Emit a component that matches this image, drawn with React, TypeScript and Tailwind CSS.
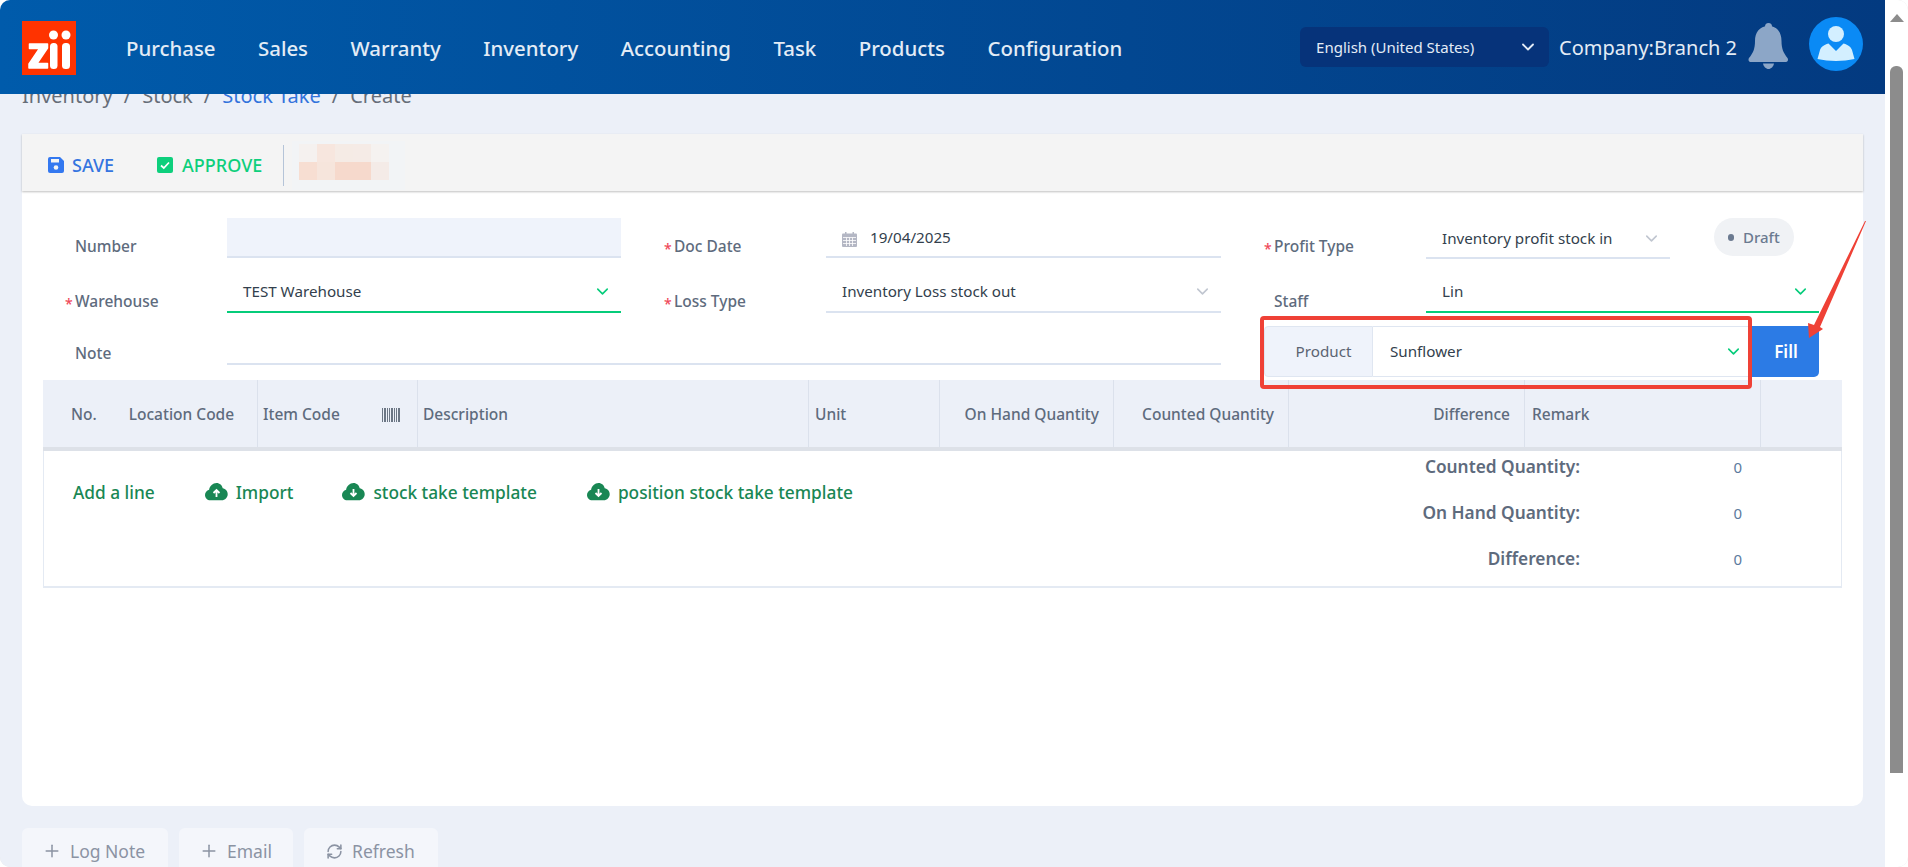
import { ChevronDown, Plus, RefreshCw } from 'lucide-react';

const NAV = ['Purchase', 'Sales', 'Warranty', 'Inventory', 'Accounting', 'Task', 'Products', 'Configuration'];

function Logo() {
  return (
    <div className="w-[54px] h-[54px] mt-[2px] bg-[#ff3300] shrink-0">
      <svg width="54" height="54" viewBox="0 0 54 54" fill="#fff" stroke="#fff" strokeLinejoin="round">
        <path strokeWidth="1.500" d="M7.500 23h18v4L15 42.500h10.500V47H7v-4L17.500 27.500H7.500z" />
        <circle cx="31.500" cy="14" r="4.500" stroke="none" />
        <circle cx="44" cy="14" r="4.500" stroke="none" />
        <rect x="28" y="22" width="7.500" height="26" rx="3.500" stroke="none" />
        <rect x="40" y="22" width="8" height="26" rx="3.500" stroke="none" />
      </svg>
    </div>
  );
}

function Bell() {
  return (
    <svg width="41" height="46" viewBox="0 0 41 46" fill="#8ca6c7" className="shrink-0">
      <circle cx="20.5" cy="3.5" r="3.5" />
      <path d="M20.5 3c9 0 13 7 13 15 0 8 2 12 6 17 1 1.500 .5 4-1.500 4H2.500c-2 0-2.500-2.500-1.500-4 4-5 6-9 6-17 0-8 4-15 13.500-15z" />
      <path d="M15 40.500h11c-.5 3-3 5.500-5.500 5.500S15.500 43.500 15 40.500z" />
    </svg>
  );
}

function Avatar() {
  return (
    <div className="w-[54px] h-[54px] mb-[6px] rounded-full bg-[#0a8af5] shrink-0">
      <svg width="54" height="54" viewBox="0 0 54 54" fill="#d3efff">
        <circle cx="27" cy="17" r="8" />
        <path d="M19.500 26.500l7.500 7.500 7.500-7.500c5 1.500 7.500 3.500 8.500 6.500l2.500 9c-11.500 2.500-25.500 2.500-37 0l2.500-9c1-3 3.500-5 8.500-6.500z" />
      </svg>
    </div>
  );
}

function CalendarIcon() {
  return (
    <svg width="15" height="15" viewBox="0 0 15 15" className="mt-[5px] shrink-0">
      <rect y="1.500" width="15" height="13.500" rx="1" fill="#b4b7c4" />
      <rect x="3" width="1.500" height="3" fill="#b4b7c4" />
      <rect x="10.500" width="1.500" height="3" fill="#b4b7c4" />
      <path stroke="#fff" strokeWidth=".8" d="M1 5.500h13M1 8.500h13M1 11.500h13M4.500 5.500V14M7.500 5.500V14M10.500 5.500V14" />
    </svg>
  );
}

function Star() {
  return <span className="text-[#ef4a5a] text-[14px] w-[10px] -ml-[10px] leading-none">*</span>;
}

function Label({ text, required }: { text: string; required?: boolean }) {
  return (
    <div className="flex items-end pl-[53px] pb-[2px] text-[15.5px] font-medium text-[#5e6b7d] leading-[20px]">
      {required && <Star />}
      <span>{text}</span>
    </div>
  );
}

function SelectBox({ value, active, w }: { value: string; active?: boolean; w?: string }) {
  return (
    <div className={`h-[41px] pt-[1px] flex items-center justify-between pl-[16px] pr-[9px] text-[15.200px] text-[#333f4d] border-b-2 ${active ? 'border-[#05cc7a]' : 'border-[#dbe3f0]'} ${w ?? 'w-full'}`}>
      <span>{value}</span>
      <ChevronDown size={19} strokeWidth={2} className={active ? 'text-[#05cc7a]' : 'text-[#c0c6d0]'} />
    </div>
  );
}

function CloudIcon({ up }: { up?: boolean }) {
  return (
    <svg width="23" height="19" viewBox="0 0 23 19" className="shrink-0">
      <path fill="#198754" d="M11.500 0c3.200 0 5.700 2.300 6.200 5.300 2.800.5 5 2.900 5 5.900 0 3.300-2.700 6-6 6H5.300C2.400 17.200 0 14.800 0 11.900c0-2.500 1.700-4.600 4.100-5.200C4.800 3 7.800 0 11.500 0z" />
      <path fill="none" stroke="#fff" strokeWidth="1.800" d={up ? 'M11.500 14V7.500M8.500 10l3-3 3 3' : 'M11.500 6v6.500M8.500 10l3 3 3-3'} />
    </svg>
  );
}

function Th({ w, right, children, last }: { w: string; right?: boolean; children?: React.ReactNode; last?: boolean }) {
  return (
    <div className={`${w} h-full flex items-center pt-[2px] px-[6px] ${right ? 'justify-end' : ''} ${last ? '' : 'border-r border-[#dbe1ec]'}`}>
      {children}
    </div>
  );
}

function Tool({ w, pl, gap, children }: { w: string; pl: string; gap: string; children: React.ReactNode }) {
  return (
    <div className={`${w} ${pl} ${gap} h-[39px] pt-[7px] flex items-center bg-[#f4f6fb] rounded-t-[6px] text-[#8b93a3] text-[17.500px]`}>
      {children}
    </div>
  );
}

export default function App() {
  const mosaic = [
    ['#f5f1ef', '#f7e6de', '#f5ebe5', '#f5ebe6', '#f5f2f0'],
    ['#f7ded2', '#f6e5dc', '#f6d9cc', '#f6d9cc', '#f4ebe7'],
  ];

  return (
    <div className="h-screen overflow-hidden bg-white" style={{ fontFamily: '"Noto Sans", sans-serif' }}>
      <div className="relative h-full flex overflow-hidden rounded-[10px] bg-[#e4e4e4]">
        <div className="flex-1 min-w-0 bg-[#ecf0f8] flex flex-col">
          <header className="relative z-10 h-[94px] shrink-0 flex items-center pl-[22px] pr-[22px] bg-gradient-to-r from-[#005bab] to-[#033a80] text-[#e3ecf6]">
            <Logo />
            <nav className="flex items-center gap-[42.500px] ml-[50px] mt-[2px] text-[20.400px] font-medium">
              {NAV.map((n) => (
                <span key={n}>{n}</span>
              ))}
            </nav>
            <div className="ml-auto w-[249px] h-[40px] flex items-center justify-between pl-[16px] pr-[11px] rounded-[6px] bg-[#06337a] text-[15px]">
              <span>English (United States)</span>
              <ChevronDown size={20} strokeWidth={2.2} />
            </div>
            <span className="ml-[10px] mt-[2px] text-[20px] whitespace-nowrap">Company:Branch 2</span>
            <div className="ml-[11px] mr-[20px] mb-[2px]">
              <Bell />
            </div>
            <Avatar />
          </header>

          <div className="-mt-[12px] h-[52px] shrink-0 px-[22px] flex items-start gap-[11px] text-[20px] leading-[28px] text-[#666d78]">
            <span>Inventory</span>
            <span>/</span>
            <span>Stock</span>
            <span>/</span>
            <span className="text-[#3273dc]">Stock Take</span>
            <span>/</span>
            <span>Create</span>
          </div>

          <div className="mx-[22px] h-[672px] shrink-0 bg-white rounded-b-[10px]">
            <div className="h-[57px] pt-[5px] bg-[#f4f4f4] shadow-[0_1px_2px_rgba(0,0,0,0.25)] flex items-center pl-[26px]">
              <div className="flex items-center gap-[8px] text-[#3575e0] text-[18px] font-medium">
                <svg width="16" height="16" viewBox="0 0 16 16">
                  <path fill="#3378f0" d="M2 0h10l4 4v10a2 2 0 0 1-2 2H2a2 2 0 0 1-2-2V2a2 2 0 0 1 2-2z" />
                  <rect x="3" y="2" width="8" height="3.500" fill="#f4f4f4" />
                  <circle cx="8" cy="10.500" r="2.300" fill="#f4f4f4" />
                </svg>
                SAVE
              </div>
              <div className="ml-[43px] flex items-center gap-[9px] text-[#0dcf7c] text-[18px] font-medium">
                <svg width="16" height="16" viewBox="0 0 16 16">
                  <rect width="16" height="16" rx="2" fill="#0dcf7c" />
                  <path d="M4 8.500l2.800 2.500L12 5.500" fill="none" stroke="#fff" strokeWidth="1.700" />
                </svg>
                APPROVE
              </div>
              <div className="ml-[21px] w-[1px] h-[41px] bg-[#b5c4d8]" />
              <div className="ml-[8px] w-[113px] h-[49px] bg-[#f2f4f6] pl-[7px] pt-[3px]">
                {mosaic.map((row, i) => (
                  <div key={i} className="flex">
                    {row.map((c, j) => (
                      <div key={j} className="w-[18px] h-[18px]" style={{ background: c }} />
                    ))}
                  </div>
                ))}
              </div>
            </div>

            <div className="pt-[27px] grid grid-cols-[205px_394px_205px_395px_205px_393px] grid-rows-[40px_41px_51px] gap-y-[13.500px]">
              <Label text="Number" />
              <div className="h-[40px] bg-[#eff3fb] border-b-2 border-[#dbe3f0]" />
              <Label text="Doc Date" required />
              <div className="h-[40px] flex items-center pl-[16px] border-b-2 border-[#dbe3f0] text-[15.200px] text-[#333f4d]">
                <CalendarIcon />
                <span className="ml-[13px]">19/04/2025</span>
              </div>
              <Label text="Profit Type" required />
              <div className="flex items-start">
                <SelectBox value="Inventory profit stock in" w="w-[244px]" />
                <div className="ml-[44px] w-[80px] h-[38px] rounded-full bg-[#f0f2f5] flex items-center pl-[14px] gap-[9px] text-[15px] font-medium text-[#6b7a90]">
                  <span className="w-[6px] h-[7px] rounded-full bg-[#6b7a90]" />
                  Draft
                </div>
              </div>

              <Label text="Warehouse" required />
              <SelectBox value="TEST Warehouse" active />
              <Label text="Loss Type" required />
              <SelectBox value="Inventory Loss stock out" />
              <Label text="Staff" />
              <SelectBox value="Lin" active />

              <div className="h-[39px] flex">
                <Label text="Note" />
              </div>
              <div className="[grid-column:2/5] h-[39px] border-b-2 border-[#dbe3f0]" />
              <div className="col-span-2 ml-[43px] flex h-[51px] text-[15.200px] text-[#333f4d]">
                <div className="w-[109px] pl-[10px] flex items-center justify-center bg-[#eff3fb] border border-[#dfe6f1] rounded-l-[4px] text-[#5b6472]">
                  Product
                </div>
                <div className="w-[376px] flex items-center justify-between pl-[17px] pr-[6px] border-y border-[#dfe6f1]">
                  <span>Sunflower</span>
                  <ChevronDown size={19} strokeWidth={2} className="text-[#05cc7a]" />
                </div>
                <div className="flex-1 pl-[4px] flex items-center justify-center bg-[#2c7be5] rounded-r-[5px] text-white text-[17px] font-semibold">
                  Fill
                </div>
              </div>
            </div>

            <div className="mx-[21px] mt-[3px] h-[208px] border-x border-b-2 border-[#e4eaf3]">
              <div className="-mx-[1px] h-[71px] bg-[#ecf0f8] border-b-4 border-[#dde1e8] flex items-center text-[15.500px] font-medium text-[#5e6b7d]">
                <Th w="w-[215px]">
                  <span className="ml-[22px]">No.</span>
                  <span className="ml-[32px]">Location Code</span>
                </Th>
                <Th w="w-[160px]">
                  <span className="-ml-[1px]">Item Code</span>
                  <svg width="18" height="14" viewBox="0 0 18 14" className="ml-auto mr-[11px]" fill="#6b7684">
                    <rect x="0" width="1" height="14" />
                    <rect x="2" width="2" height="14" />
                    <rect x="5" width="1" height="14" />
                    <rect x="7" width="1" height="14" />
                    <rect x="9" width="2" height="14" />
                    <rect x="12" width="1" height="14" />
                    <rect x="14" width="1" height="14" />
                    <rect x="16" width="2" height="14" />
                  </svg>
                </Th>
                <Th w="w-[391px]"><span className="-ml-[1px]">Description</span></Th>
                <Th w="w-[131px]">Unit</Th>
                <Th w="w-[174px]" right><span className="mr-[8px]">On Hand Quantity</span></Th>
                <Th w="w-[175px]" right><span className="mr-[8px]">Counted Quantity</span></Th>
                <Th w="w-[236px]" right>
                  <span className="mr-[8px]">Difference</span>
                </Th>
                <Th w="w-[236px]"><span className="ml-[1px]">Remark</span></Th>
                <Th w="flex-1" last />
              </div>
              <div className="flex items-start">
                <div className="ml-[29px] mt-[29px] flex items-center text-[17.300px] font-medium text-[#198754] whitespace-nowrap">
                  <span>Add a line</span>
                  <span className="ml-[50px]"><CloudIcon up /></span>
                  <span className="ml-[8px]">Import</span>
                  <span className="ml-[49px]"><CloudIcon /></span>
                  <span className="ml-[8px]">stock take template</span>
                  <span className="ml-[50px]"><CloudIcon /></span>
                  <span className="ml-[8px]">position stock take template</span>
                </div>
                <div className="ml-auto mr-[99px] -mt-[7px] grid grid-cols-[auto_162px] grid-rows-[46px_46px_46px] items-center text-[17.300px] font-semibold text-[#5e6b7d]">
                  {['Counted Quantity:', 'On Hand Quantity:', 'Difference:'].map((t) => (
                    <div key={t} className="contents">
                      <div className="text-right">{t}</div>
                      <div className="text-right text-[15px] font-normal text-[#5b7a9d]">0</div>
                    </div>
                  ))}
                </div>
              </div>
            </div>
          </div>

          <div className="mt-[22px] mx-[22px] flex gap-[11px]">
            <Tool w="w-[146px]" pl="pl-[20px]" gap="gap-[8px]"><Plus size={20} strokeWidth={1.800} /> Log Note</Tool>
            <Tool w="w-[114px]" pl="pl-[20px]" gap="gap-[8px]"><Plus size={20} strokeWidth={1.800} /> Email</Tool>
            <Tool w="w-[134px]" pl="pl-[22px]" gap="gap-[9px]"><RefreshCw size={17} strokeWidth={2.200} /> Refresh</Tool>
          </div>
        </div>

        <div className="w-[23px] shrink-0 bg-white flex flex-col items-center pt-[14px]">
          <div className="w-0 h-0 border-x-[7.500px] border-x-transparent border-b-[8px] border-b-[#8c8c8c]" />
          <div className="mt-[44px] w-[13px] h-[707px] bg-[#8c8c8c] rounded-t-[6px]" />
        </div>

        {/* red annotation drawn over the screenshot */}
        <div className="absolute left-[1260px] top-[316px] w-[492px] h-[73px] border-4 border-[#ef4136] rounded-[4px] z-20" />
        <svg className="absolute left-0 top-0 z-20" width="1908" height="867" viewBox="0 0 1908 867">
          <polygon fill="#ef4136" points="1866,221 1820,327 1823,329 1809,338 1808,323 1814,325 1865,221" />
        </svg>
      </div>
    </div>
  );
}
